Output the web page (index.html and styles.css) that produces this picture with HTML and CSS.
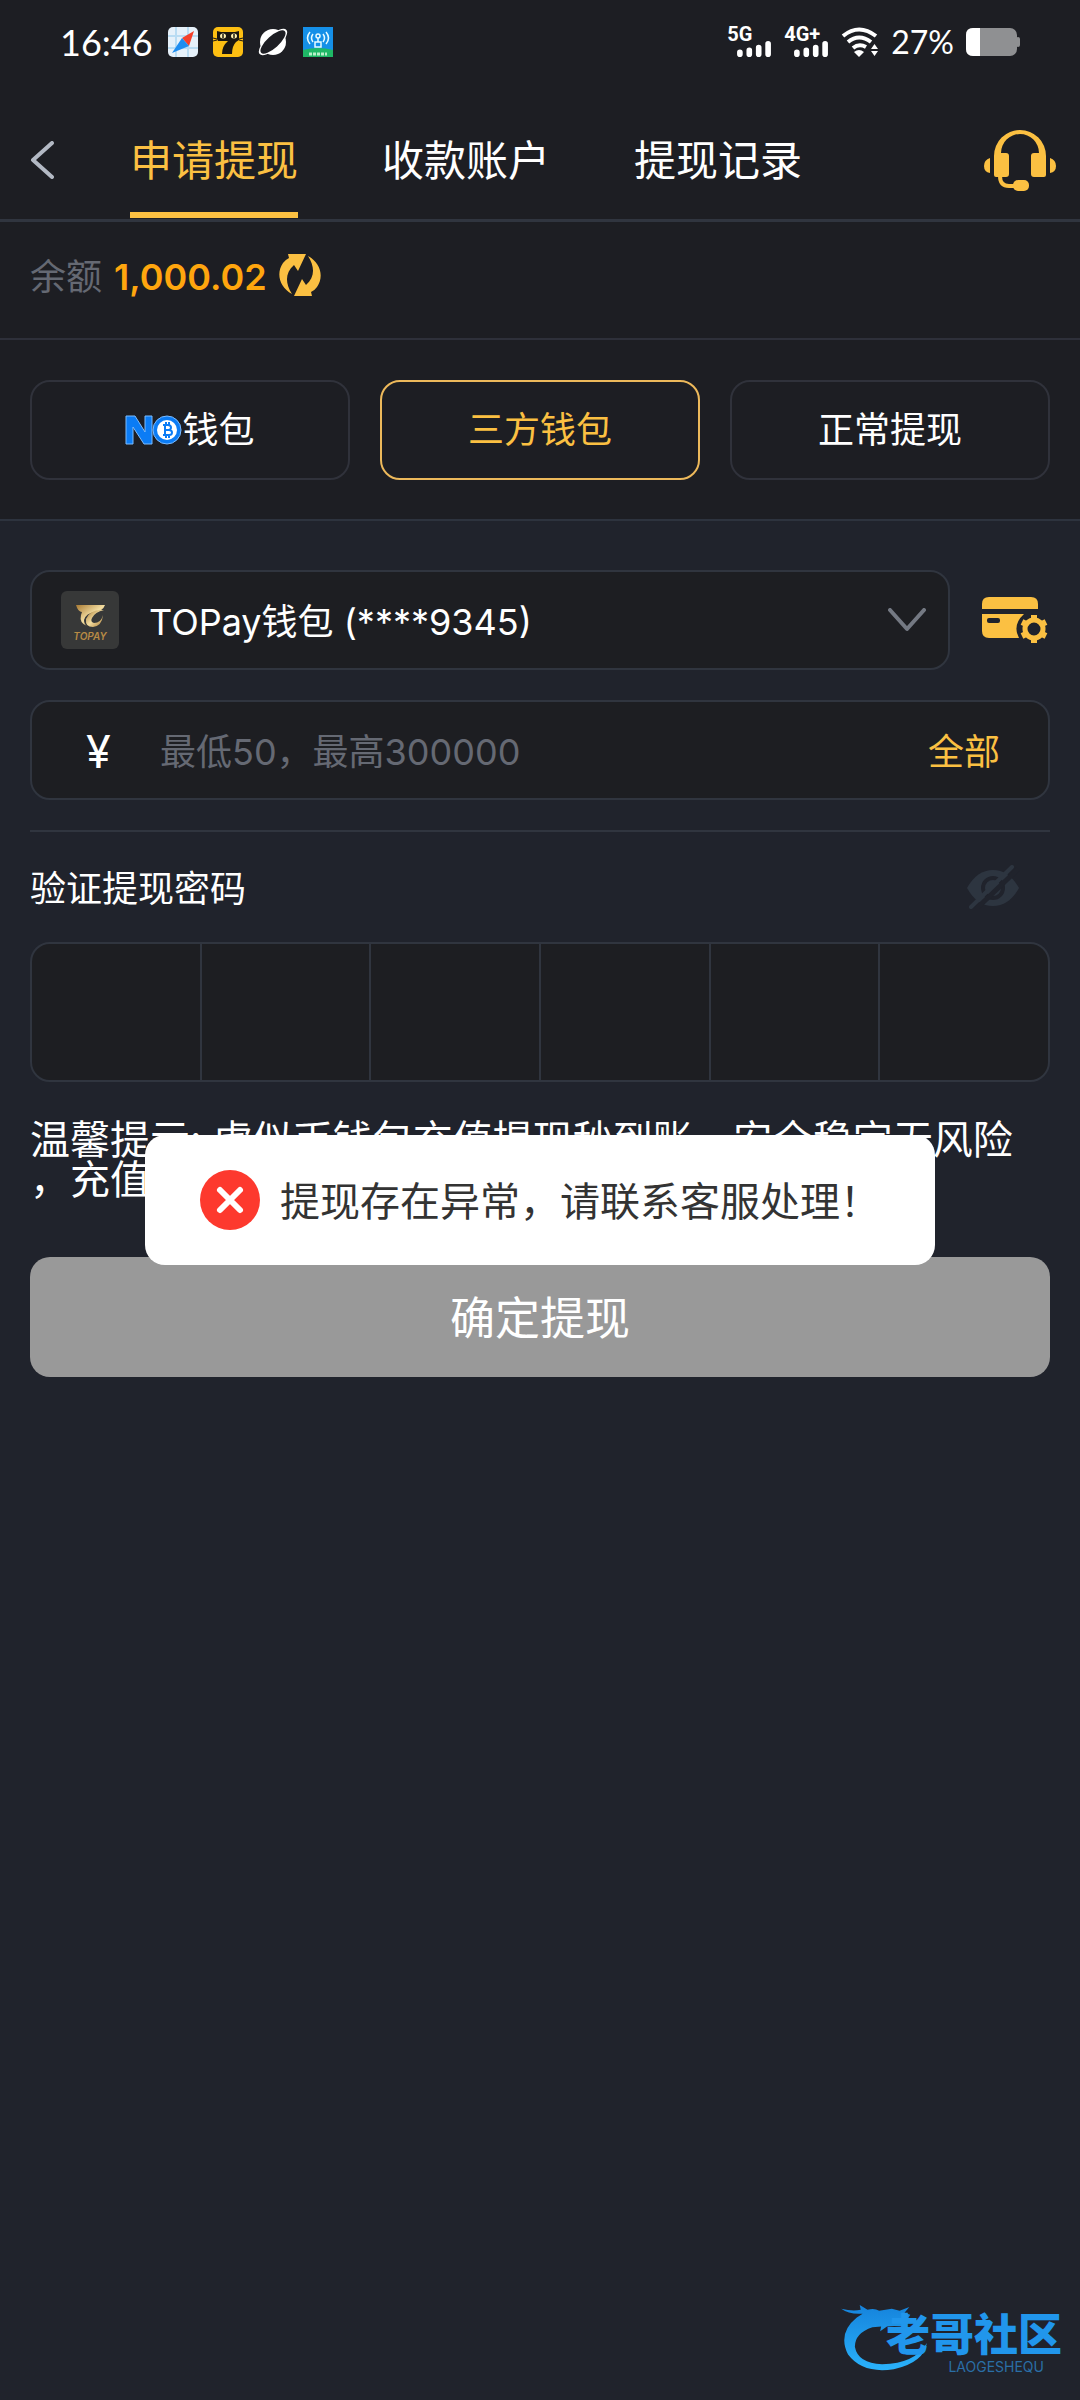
FILE: index.html
```html
<!DOCTYPE html>
<html lang="zh-CN">

<head>
    <meta charset="UTF-8">
    <meta name="viewport" content="width=device-width, initial-scale=1.0">
    <title>申请提现</title>
    <link rel="stylesheet" href="styles.css">
</head>

<body>
    <div class="topArea">
        <div class="statusBar">
            <div class="statusLeft">
                <span class="time">16:46</span>
                <svg class="appIcon" viewBox="0 0 30 30">
                    <rect width="30" height="30" rx="5" fill="#e6f1fa" />
                    <path d="M8 0v30M20 0v30M0 9h30M0 21h30" stroke="#b9dcf3" stroke-width="2" />
                    <path d="M26 4 21 19 14 11z" fill="#f4402a" />
                    <path d="M14 11 21 19 4 26z" fill="#1e8df0" />
                </svg>
                <svg class="appIcon" viewBox="0 0 30 30">
                    <rect width="30" height="30" rx="5" fill="#fdbf12" />
                    <path d="M4 4l4 1h14l4-1v9l-3 2q-4 4-4 12H9q0-8 6-13H5l-1-2z" fill="#1b1712" />
                    <path d="M0 11l4 1M0 14l4-1M30 11l-4 1M30 14l-4-1" stroke="#1b1712" />
                    <ellipse cx="10" cy="9" rx="3" ry="2.500" fill="#fff0b0" />
                    <ellipse cx="21" cy="9" rx="3" ry="2.500" fill="#fff0b0" />
                    <path d="M10 7v4M21 7v4" stroke="#1b1712" stroke-width="1.500" />
                </svg>
                <svg class="appIcon" viewBox="0 0 30 30">
                    <circle cx="15" cy="15" r="13" fill="#fff" />
                    <ellipse cx="15" cy="15" rx="18" ry="7" fill="#fff" transform="rotate(-42 15 15)" />
                    <ellipse cx="15" cy="15" rx="16" ry="6" fill="#1d1e23" transform="rotate(-42 15 15)" />
                </svg>
                <svg class="appIcon" viewBox="0 0 30 30">
                    <rect width="30" height="30" fill="#1590e8" />
                    <path d="M0 23q15-4 30 0v7H0z" fill="#1fb866" />
                    <g fill="none" stroke="#e8fbff" stroke-width="1.500">
                        <path d="M10 7q-3 4 0 8M7 5q-5 6 0 12M20 7q3 4 0 8M23 5q5 6 0 12" />
                        <circle cx="15" cy="9" r="2" />
                        <path d="M15 11v4M12 15h6v5h-6z" />
                    </g>
                    <path d="M6 27h18" stroke="#b8f0c8" stroke-width="3" stroke-dasharray="3 1" />
                </svg>
            </div>
            <div class="statusRight">
                <span class="signal">
                    <span class="net">5G</span>
                    <svg class="bars" viewBox="0 0 36 17">
                        <path d="M3 12v2M13 10v4M23 7v7M33 3v11" stroke="#fff" stroke-width="6" stroke-linecap="round" />
                    </svg>
                </span>
                <span class="signal">
                    <span class="net">4G+</span>
                    <svg class="bars" viewBox="0 0 36 17">
                        <path d="M3 12v2M13 10v4M23 7v7M33 3v11" stroke="#fff" stroke-width="6" stroke-linecap="round" />
                    </svg>
                </span>
                <svg class="wifi" viewBox="0 0 38 30">
                    <g fill="none" stroke="#fff" stroke-width="4">
                        <path d="M2 9Q18-4 35 9" />
                        <path d="M7 15Q18 6 30 15" />
                        <path d="M12 21Q18 16 25 20" />
                    </g>
                    <path d="M13 25q5-4 10 0l-5 5z" fill="#fff" />
                    <path d="M30 22l3.500-5 3.500 5zM30 24l3.500 5 3.500-5z" fill="#fff" />
                </svg>
                <span class="percent">27%</span>
                <svg class="battery" viewBox="0 0 54 28">
                    <rect width="51" height="28" rx="7" fill="#8f9092" />
                    <rect x="50" y="9" width="4" height="10" rx="2" fill="#8f9092" />
                    <path d="M14 0H7Q0 0 0 7v14q0 7 7 7h7z" fill="#fff" />
                </svg>
            </div>
        </div>

        <div class="header">
            <button type="button" class="iconBtn backBtn" aria-label="返回">
                <svg width="24" height="38" viewBox="0 0 24 38">
                    <path d="M22 2 3 19l19 17" fill="none" stroke="#b3b9c4" stroke-width="4" stroke-linecap="round" stroke-linejoin="round" />
                </svg>
            </button>
            <nav class="tabs">
                <a href="#" class="tab active">申请提现</a>
                <a href="#" class="tab">收款账户</a>
                <a href="#" class="tab">提现记录</a>
            </nav>
            <button type="button" class="iconBtn" aria-label="客服">
                <svg width="72" height="62" viewBox="0 0 72 62" fill="#fbc042">
                    <path d="M10 46V27a26 26 0 0 1 52 0v19q0 2-2 2H50q-3 0-3-3V27q0-3 3-3h5a19 19 0 0 0-38 0h5q3 0 3 3v18q0 3-3 3H12q-2 0-2-2z" />
                    <path d="M6 29v15q-6-1-6-7t6-8zM66 29v15q6-1 6-7t-6-8z" />
                    <path d="M16 47q0 10 9 10h8" fill="none" stroke="#fbc042" stroke-width="4" />
                    <rect x="29" y="51" width="16" height="11" rx="5" />
                </svg>
            </button>
        </div>

        <div class="balance">
            <span class="balanceLabel">余额</span>
            <strong class="balanceNum">1,000.02</strong>
            <button type="button" class="iconBtn" aria-label="刷新">
                <svg width="42" height="44" viewBox="0 0 42 44" fill="#fbc042">
                    <path d="M9 1h18l-8 17-4-6C6 20 6 30 13 41 0 34-3 20 4 10q2-3 6-5z" />
                    <path d="M33 43H15l8-17 4 6c9-8 9-18 2-29 13 7 16 21 9 31q-2 3-6 5z" />
                </svg>
            </button>
        </div>

        <div class="walletTypes">
            <button type="button" class="walletBtn">
                <svg width="57" height="30" viewBox="0 0 57 30">
                    <path d="M1 29V1h9l10 16V1h7v28h-8L8 12v17z" fill="#0b7cf5" stroke="#7dbcff" />
                    <circle cx="42" cy="15" r="14" fill="#0b7cf5" stroke="#7dbcff" />
                    <circle cx="42" cy="15" r="10" fill="#fff" />
                    <path d="M38 10h5q3 0 3 2.500T43 15h-4 5q3 0 3 2.500T44 20h-6M40 10v10M41 7v3M44 7v3M41 20v3M44 20v3" fill="none" stroke="#0b7cf5" stroke-width="2" />
                </svg>
                <span>钱包</span>
            </button>
            <button type="button" class="walletBtn active">三方钱包</button>
            <button type="button" class="walletBtn">正常提现</button>
        </div>
    </div>

    <form class="withdrawForm">
        <div class="accountRow">
            <div class="field accountField">
                <svg class="walletLogo" viewBox="0 0 58 58">
                    <defs>
                        <linearGradient id="gold" x1="0" y1="0" x2="1" y2="1">
                            <stop offset="0" stop-color="#a87a33" />
                            <stop offset="0.5" stop-color="#f2dca0" />
                            <stop offset="1" stop-color="#a9772e" />
                        </linearGradient>
                    </defs>
                    <rect width="58" height="58" rx="6" fill="#373838" />
                    <path d="M15 14h29q-2 6-10 7-9 1-11 8 0 4 3 6-8-3-6-11l1-3q-4 0-6-7z" fill="url(#gold)" />
                    <path d="M43 19q-14-1-18 9-1 8 7 8 9-1 10-12-2 8-9 8-4-1-2-5 3-6 12-8z" fill="url(#gold)" />
                    <text x="29" y="49" class="logoText" fill="#b78a45">TOPAY</text>
                </svg>
                <select class="accountSelect" aria-label="提现钱包">
                    <option selected>TOPay钱包 (****9345)</option>
                </select>
                <svg class="chevron" viewBox="0 0 38 24">
                    <path d="M2 2l17 19L36 2" fill="none" stroke="#747983" stroke-width="4" stroke-linecap="round" stroke-linejoin="round" />
                </svg>
            </div>
            <button type="button" class="iconBtn" aria-label="管理钱包">
                <svg width="66" height="46" viewBox="0 0 66 46">
                    <path d="M0 12V7q0-7 7-7h42q7 0 7 7v5zM0 17h42q-12 11-5 24H7q-7 0-7-7z" fill="#fbc042" />
                    <rect x="5" y="21" width="13" height="5" rx="2" fill="#20232c" />
                    <circle cx="52" cy="32" r="9" fill="none" stroke="#fbc042" stroke-width="5" />
                    <path d="M52 18v5M52 41v5M40 25l4 2M60 37l4 2M40 39l4-2M60 27l4-2" stroke="#fbc042" stroke-width="6" />
                </svg>
            </button>
        </div>

        <div class="field amountField">
            <label for="amount" class="yen">¥</label>
            <input type="text" id="amount" name="amount" class="amountInput" placeholder="最低50，最高300000">
            <button type="button" class="allBtn">全部</button>
        </div>

        <div class="pinHead">
            <label for="pin1">验证提现密码</label>
            <button type="button" class="iconBtn" aria-label="显示密码">
                <svg width="54" height="44" viewBox="0 0 54 44">
                    <path d="M1 23Q11 5 27 5t26 18Q43 41 27 41T1 23z" fill="#2d3540" />
                    <circle cx="27" cy="23" r="10" fill="none" stroke="#20232c" stroke-width="4" />
                    <path d="M10 44 52 4" stroke="#20232c" stroke-width="5" />
                    <path d="M5 42 46 2" stroke="#2d3540" stroke-width="4" stroke-linecap="round" />
                </svg>
            </button>
        </div>
        <div class="pinBox">
            <input type="password" id="pin1" maxlength="1" aria-label="密码第1位">
            <input type="password" id="pin2" maxlength="1" aria-label="密码第2位">
            <input type="password" id="pin3" maxlength="1" aria-label="密码第3位">
            <input type="password" id="pin4" maxlength="1" aria-label="密码第4位">
            <input type="password" id="pin5" maxlength="1" aria-label="密码第5位">
            <input type="password" id="pin6" maxlength="1" aria-label="密码第6位">
        </div>

        <div class="tipArea">
            <p class="tips">温馨提示: 虚似币钱包充值提现秒到账，安全稳定无风险，充值</p>
            <div class="toast" role="alert">
                <svg width="60" height="60" viewBox="0 0 60 60">
                    <circle cx="30" cy="30" r="30" fill="#fd392e" />
                    <path d="M20 20l20 20M40 20 20 40" stroke="#fff" stroke-width="6" stroke-linecap="round" />
                </svg>
                <span class="toastText">提现存在异常，请联系客服处理！</span>
            </div>
        </div>

        <button type="submit" class="submitBtn">确定提现</button>
    </form>

    <div class="watermark">
        <svg class="dragon" viewBox="0 0 92 74">
            <defs>
                <linearGradient id="blue" x1="0" y1="0" x2="0" y2="1">
                    <stop offset="0" stop-color="#1583dc" />
                    <stop offset="1" stop-color="#2ab2fb" />
                </linearGradient>
            </defs>
            <path d="M0 5q12 3 20 1l-1-5 8 5q7-2 12 1l13-2 8 2 10-4-5 6 6 2-3 5-10 1 10 3-3 3q-12-1-18 0l-7 5 1-5-9 1Q14 30 14 44q3 17 28 18 34-1 46-22-3 20-34 27-32 5-47-15Q-4 30 16 14l6-4Q8 11 0 5z" fill="url(#blue)" />
        </svg>
        <div class="markText">
            <span class="markName">老哥社区</span>
            <span class="markSub">LAOGESHEQU</span>
        </div>
    </div>
</body>

</html>
```
FILE: styles.css
```css
* {
    box-sizing: border-box;
}

body {
    position: relative;
    min-height: 100vh;
    margin: 0;
    background-color: #20232c;
    color: #fff;
    font-family: Inter, "Noto Sans CJK SC", sans-serif;
    font-size: 36px;
    line-height: 50px;
}

button,
input,
select {
    margin: 0;
    padding: 0;
    border: 0;
    background: none;
    color: inherit;
    font: inherit;
}

svg {
    display: block;
    flex: none;
}

.iconBtn {
    display: flex;
    align-items: center;
}

.topArea {
    background-color: #1d1e23;
    border-bottom: 2px solid #2d333e;
}

/* status bar */
.statusBar {
    display: flex;
    justify-content: space-between;
    align-items: center;
    height: 84px;
    margin-bottom: 16px;
    padding: 0 60px;
}

.statusLeft,
.statusRight {
    display: flex;
    align-items: center;
    gap: 15px;
}

.time {
    font-family: Lato, sans-serif;
    font-size: 36px;
}

.appIcon {
    width: 30px;
    height: 30px;
}

.statusRight {
    gap: 12px;
}

.signal {
    display: flex;
    flex-direction: column;
    height: 30px;
}

.net {
    font-family: Roboto, sans-serif;
    font-size: 20px;
    font-weight: 700;
    line-height: 14px;
}

.bars {
    width: 36px;
    height: 16px;
    margin-left: 9px;
}

.wifi {
    width: 38px;
    height: 30px;
}

.percent {
    font-family: Lato, sans-serif;
    font-size: 32px;
}

.battery {
    width: 54px;
    height: 28px;
}

/* header */
.header {
    display: flex;
    justify-content: space-between;
    height: 122px;
    padding: 0 24px 0 30px;
    border-bottom: 3px solid #30353f;
}

.backBtn {
    width: 100px;
}

.tabs {
    display: flex;
    flex: 1;
    gap: 84px;
}

.tab {
    height: 118px;
    padding-top: 10px;
    border-bottom: 6px solid transparent;
    color: #fff;
    font-size: 42px;
    line-height: 102px;
    text-decoration: none;
}

.tab.active {
    color: #fbc042;
    border-bottom-color: #fbc042;
}

.balance {
    display: flex;
    align-items: center;
    gap: 12px;
    height: 118px;
    padding: 0 30px 10px;
    border-bottom: 2px solid #2e303a;
}

.balanceLabel,
.balanceNum {
    padding-top: 3px;
}

.balanceLabel {
    color: #656973;
}

.balanceNum {
    color: #ffa60e;
    font-weight: 600;
}

.walletTypes {
    display: flex;
    gap: 30px;
    padding: 40px 30px 39px;
}

.walletBtn {
    display: flex;
    flex: 1;
    align-items: center;
    justify-content: center;
    height: 100px;
    border: 2px solid #30323b;
    border-radius: 20px;
}

.walletBtn.active {
    border-color: #edb95b;
    color: #fbc042;
}

/* form */
.withdrawForm {
    padding: 49px 30px;
}

.accountRow {
    display: flex;
    gap: 32px;
    margin-bottom: 30px;
    padding-right: 2px;
}

.field {
    display: flex;
    align-items: center;
    height: 100px;
    border: 2px solid #30353f;
    border-radius: 20px;
    background-color: #1d1e22;
}

.accountField {
    flex: 1;
    padding: 0 22px 0 29px;
}

.walletLogo {
    width: 58px;
    height: 58px;
}

.logoText {
    font-size: 10px;
    font-style: italic;
    font-weight: 600;
    text-anchor: middle;
}

.accountSelect {
    flex: 1;
    min-width: 0;
    height: 96px;
    padding: 3px 0 0 30px;
    appearance: none;
    outline: none;
}

.chevron {
    width: 38px;
    height: 24px;
    pointer-events: none;
}

.amountField {
    padding-right: 48px;
}

.yen {
    width: 128px;
    padding: 3px 0 0 54px;
    font-size: 45px;
}

.amountInput {
    flex: 1;
    min-width: 0;
    height: 96px;
    padding-top: 3px;
    outline: none;
}

.amountInput::placeholder {
    color: #656973;
    opacity: 1;
}

.allBtn {
    padding-top: 3px;
    color: #fbc042;
}

.pinHead {
    display: flex;
    align-items: center;
    justify-content: space-between;
    height: 112px;
    margin-top: 30px;
    padding-right: 30px;
    border-top: 2px solid #30353f;
}

.pinHead label {
    padding-top: 3px;
}

.pinBox {
    display: flex;
    height: 140px;
    border: 2px solid #30353f;
    border-radius: 20px;
    background-color: #1d1e22;
    overflow: hidden;
}

.pinBox input {
    flex: 1;
    min-width: 0;
    text-align: center;
    outline: none;
}

.pinBox input + input {
    border-left: 2px solid #30353f;
}

.tipArea {
    position: relative;
    padding: 38px 0 57px;
}

.tips {
    margin: 0;
    font-size: 40px;
    line-height: 40px;
    line-break: anywhere;
}

/* toast floats over the tips and the submit button */
.toast {
    position: absolute;
    top: 53px;
    left: 50%;
    display: flex;
    align-items: center;
    gap: 20px;
    height: 130px;
    padding: 0 55px;
    border-radius: 20px;
    background-color: #fff;
    color: #333;
    font-size: 40px;
    white-space: nowrap;
    transform: translateX(-50%);
}

.toastText {
    padding-top: 3px;
}

.submitBtn {
    width: 100%;
    height: 120px;
    padding-top: 3px;
    border-radius: 20px;
    background-color: #999;
    font-size: 45px;
}

.watermark {
    position: absolute;
    right: 18px;
    bottom: 24px;
    display: flex;
}

.dragon {
    width: 92px;
    height: 72px;
}

.markText {
    display: flex;
    flex-direction: column;
    align-items: center;
    margin-left: -46px;
    padding-top: 6px;
    color: #2196ec;
}

.markName {
    font-size: 44px;
    font-weight: 900;
    line-height: 50px;
}

.markSub {
    align-self: flex-end;
    margin-right: 18px;
    color: #2a6ea6;
    font-size: 14px;
    line-height: 14px;
}
```
